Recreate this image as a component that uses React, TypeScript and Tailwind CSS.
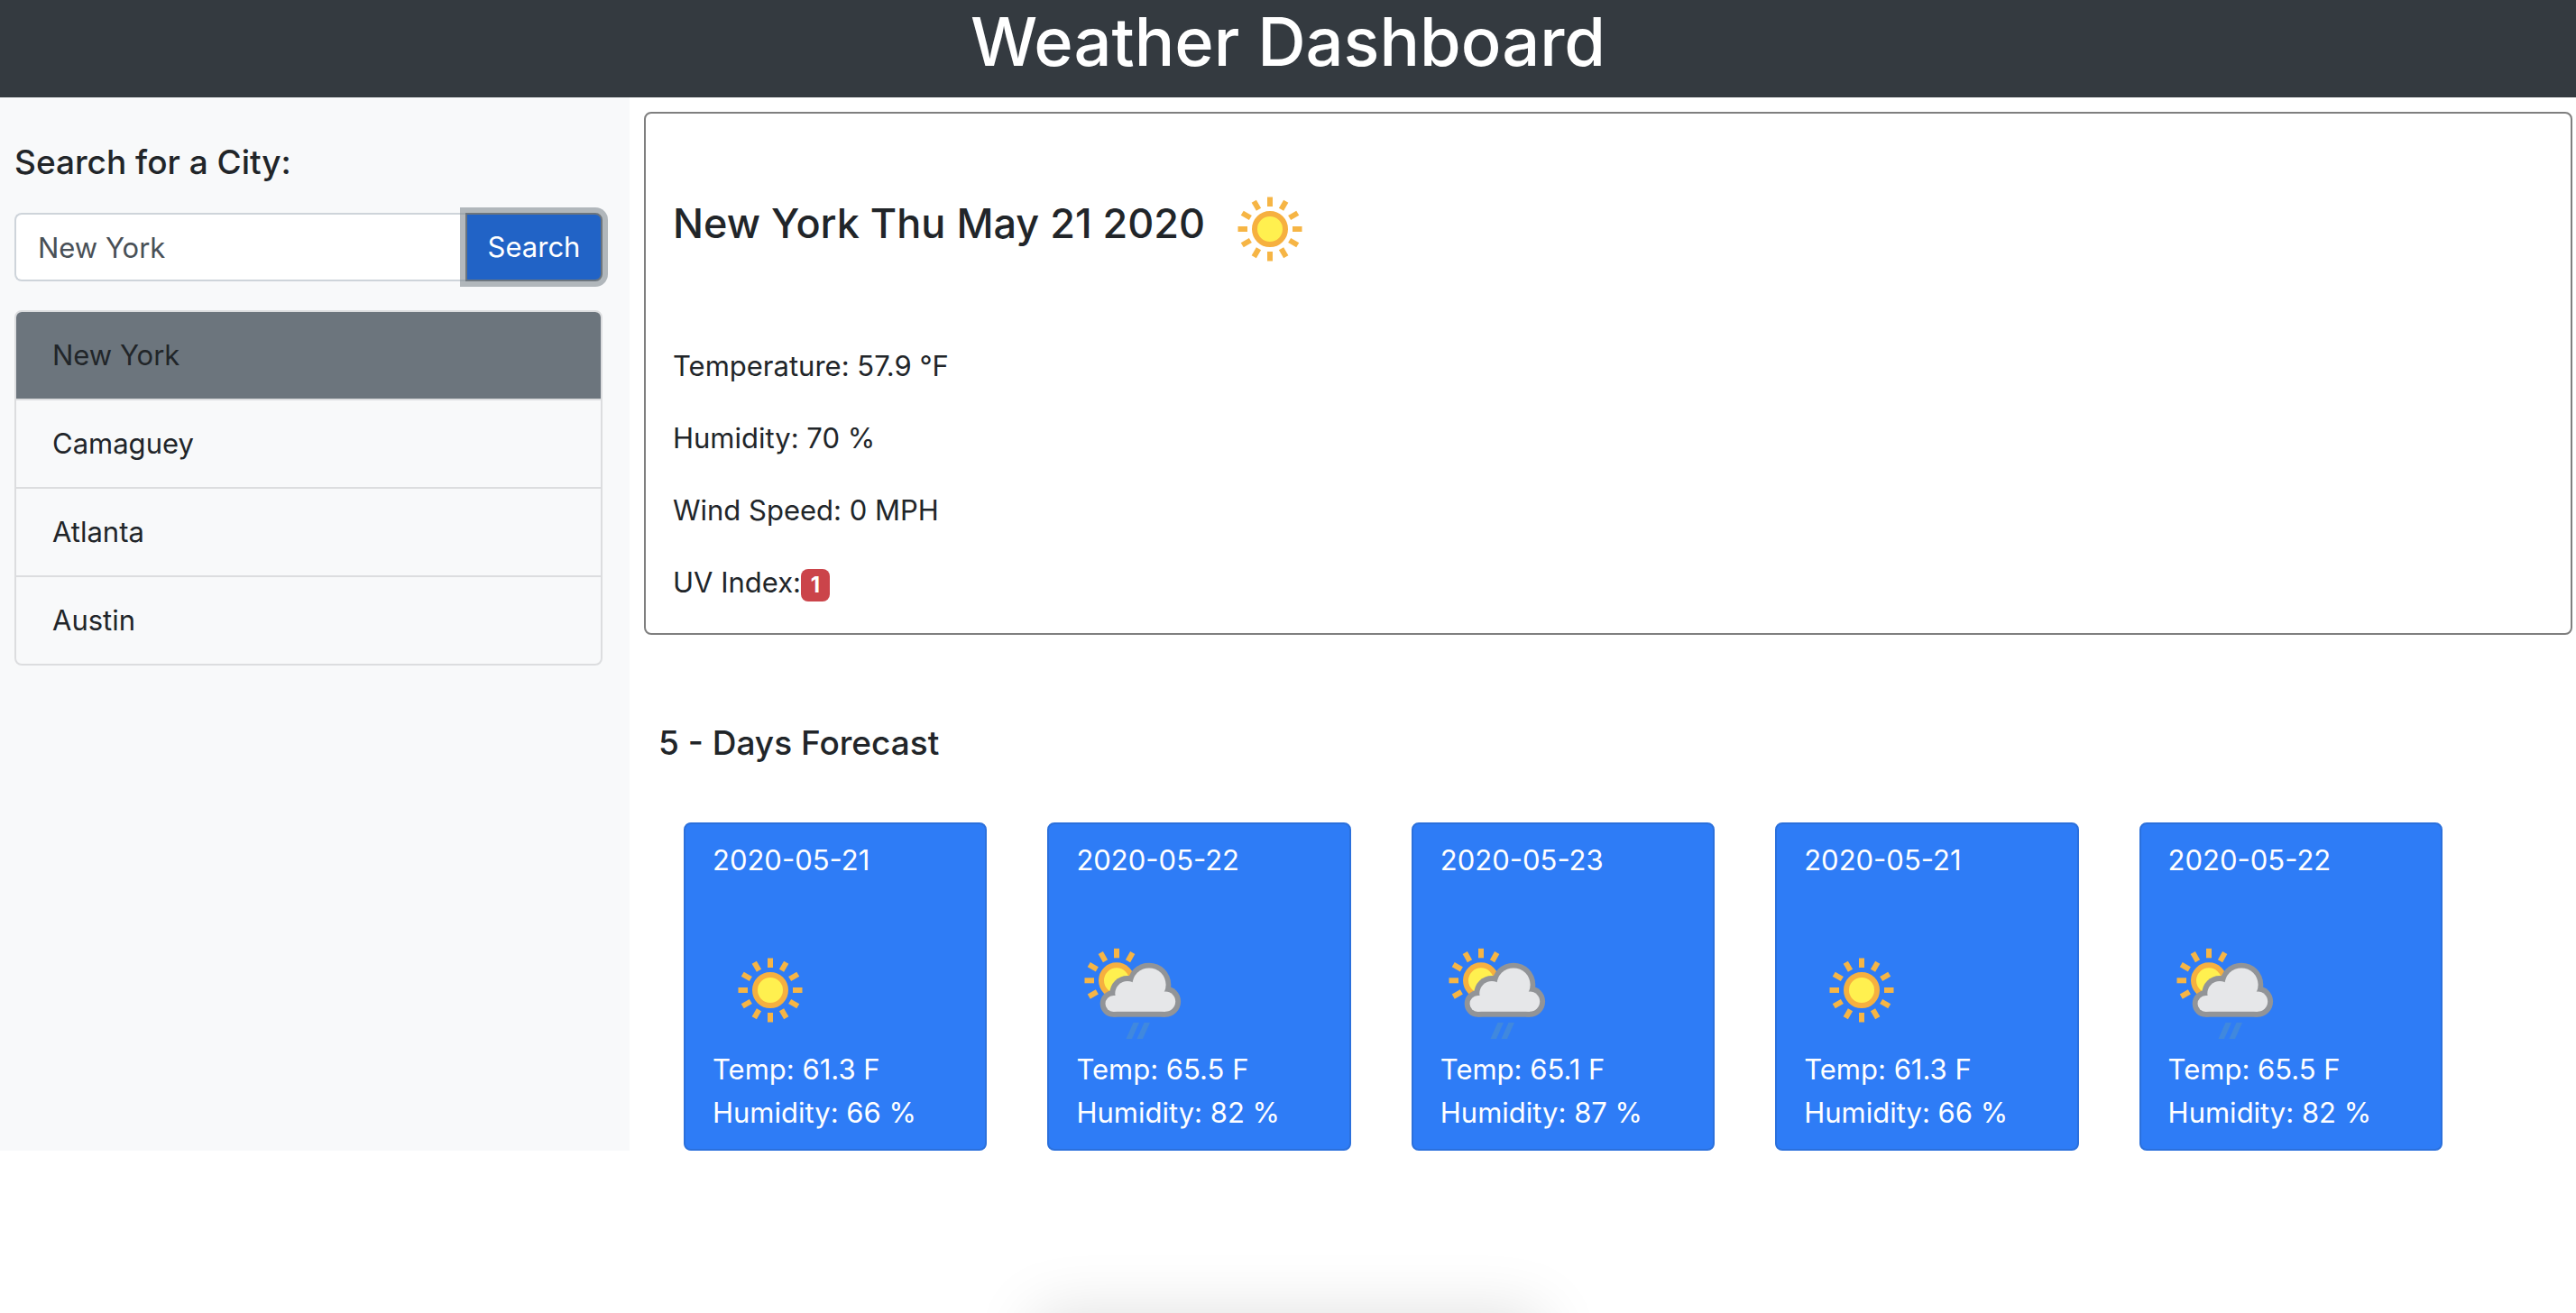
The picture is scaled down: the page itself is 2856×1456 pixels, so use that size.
import { useState } from "react";

const SUN_ANGLES = [0, 30, 60, 90, 120, 150, 180, 210, 240, 270, 300, 330];
const PARTIAL_SUN_ANGLES = [240, 270, 300, 330, 0, 30];

function Sun({ cx, cy, angles }: { cx: number; cy: number; angles: number[] }) {
  return (
    <g>
      {angles.map((angle) => (
        <rect
          key={angle}
          x={cx - 3}
          y={cy - 35.5}
          width="6"
          height="10.5"
          fill="#f6b545"
          transform={`rotate(${angle} ${cx} ${cy})`}
        />
      ))}
      <circle cx={cx} cy={cy} r="17" fill="#fff04f" stroke="#f6b03f" strokeWidth="6" />
    </g>
  );
}

function SunnyIcon() {
  return (
    <svg viewBox="0 0 128 128" className="size-32 shrink-0" role="img" aria-label="Clear sky">
      <Sun cx={64} cy={64} angles={SUN_ANGLES} />
    </svg>
  );
}

function RainIcon() {
  return (
    <svg viewBox="0 0 128 128" className="size-32 shrink-0" role="img" aria-label="Light rain">
      <Sun cx={45} cy={53.3} angles={PARTIAL_SUN_ANGLES} />
      <g fill="#929497">
        <circle cx="41.4" cy="79" r="14.7" />
        <circle cx="57" cy="67.7" r="19.7" />
        <circle cx="81" cy="58" r="24.3" />
        <circle cx="99" cy="76.6" r="17.1" />
        <rect x="41.4" y="68" width="57.6" height="25.7" />
      </g>
      <g fill="#e6e7e9">
        <circle cx="41.4" cy="79" r="8.9" />
        <circle cx="57" cy="67.7" r="13.7" />
        <circle cx="81" cy="58" r="18.6" />
        <circle cx="99" cy="76.6" r="11.2" />
        <rect x="41.4" y="70" width="57.6" height="17.8" />
      </g>
      <path d="M63.5 100H70L62 118H55.5ZM75.500 100H82L74 118H67.500Z" fill="#4088de" />
    </svg>
  );
}

const cities = ["New York", "Camaguey", "Atlanta", "Austin"];

const forecast = [
  { date: "2020-05-21", rain: false, temp: "61.3", humidity: 66 },
  { date: "2020-05-22", rain: true, temp: "65.5", humidity: 82 },
  { date: "2020-05-23", rain: true, temp: "65.1", humidity: 87 },
  { date: "2020-05-21", rain: false, temp: "61.3", humidity: 66 },
  { date: "2020-05-22", rain: true, temp: "65.5", humidity: 82 },
];

export default function App() {
  const [query, setQuery] = useState("New York");

  return (
    <div className="relative min-h-screen overflow-hidden bg-white font-['Inter','Liberation_Sans',sans-serif] text-[31px] leading-12 text-[#212529]">
      <header className="bg-[#343a40] pb-4 text-center">
        <h1 className="text-[74px] leading-[92px] font-medium text-white">Weather Dashboard</h1>
      </header>

      <div className="flex">
        <div className="w-1/4 shrink-0 pr-4">
          <aside className="h-full bg-[#f8f9fa] pt-12 pr-[30px] pl-4">
            <form onSubmit={(e) => e.preventDefault()}>
              <label htmlFor="city" className="block text-[37px] font-medium">
                Search for a City:
              </label>
              <div className="mt-8 flex">
                <input
                  id="city"
                  type="text"
                  value={query}
                  onChange={(e) => setQuery(e.target.value)}
                  className="h-19 min-w-0 flex-1 rounded-l-lg border-2 border-r-0 border-[#ced4da] bg-white px-6 text-[#495057] outline-none"
                />
                <button
                  type="submit"
                  className="h-19 w-38 rounded-r-lg border-2 border-[#6c757d] bg-[#2163c6] text-white ring-6 ring-[#828a91]/60"
                >
                  Search
                </button>
              </div>
            </form>
            <ul className="mt-8 divide-y-2 divide-[#dcdddf] overflow-hidden rounded-lg border-2 border-[#dcdddf]">
              {cities.map((city, i) => (
                <li key={city}>
                  <button
                    type="button"
                    onClick={() => setQuery(city)}
                    className={i === 0 ? "block w-full bg-[#6c757d] px-10 py-6 text-left" : "block w-full px-10 py-6 text-left"}
                  >
                    {city}
                  </button>
                </li>
              ))}
            </ul>
          </aside>
        </div>

        <main className="min-w-0 flex-1 pt-4">
          <section className="mr-1 rounded-lg border-2 border-[#7f7f7f] px-[30px] py-8">
            <div className="my-8 flex items-center gap-2">
              <h2 className="pb-3 text-[45px] leading-14 font-medium">New York Thu May 21 2020</h2>
              <SunnyIcon />
            </div>
            <div className="mt-16 flex flex-col gap-8">
              <p>Temperature: 57.9 °F</p>
              <p>Humidity: 70 %</p>
              <p>Wind Speed: 0 MPH</p>
              <p>
                UV Index:
                <span className="inline-block min-w-8 rounded-lg bg-[#cb444a] py-1.5 text-center text-[24px] leading-6 font-bold text-white">
                  1
                </span>
              </p>
            </div>
          </section>

          <h3 className="mt-24 pl-4 text-[37px] font-medium">5 - Days Forecast</h3>
          <div className="mt-16 grid grid-cols-5 gap-[67px] pr-[148px] pl-11">
            {forecast.map((day, i) => (
              <article key={i} className="rounded-lg border-2 border-[#2b70dc] bg-[#2e7cf6] px-[30px] py-4 text-white">
                <p>{day.date}</p>
                <div className="mt-14">{day.rain ? <RainIcon /> : <SunnyIcon />}</div>
                <p>Temp: {day.temp} F</p>
                <p>Humidity: {day.humidity} %</p>
              </article>
            ))}
          </div>
        </main>
      </div>

      <div className="absolute top-full left-1/2 h-24 w-[560px] -translate-x-1/2 shadow-[0_0_70px_rgba(0,0,0,0.13)]" />
    </div>
  );
}
